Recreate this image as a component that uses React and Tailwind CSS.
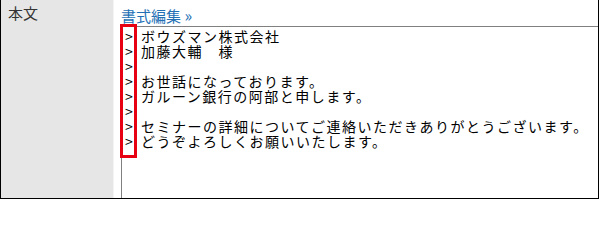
const lines = [
  'ボウズマン株式会社',
  '加藤大輔　様',
  '',
  'お世話になっております。',
  'ガルーン銀行の阿部と申します。',
  '',
  'セミナーの詳細についてご連絡いただきありがとうございます。',
  'どうぞよろしくお願いいたします。',
]

export default function App() {
  return (
    <div className="relative flex h-[199px] w-[599px] overflow-hidden border-x border-b border-black bg-white font-['Noto_Sans_CJK_JP',sans-serif]">
      <div className="w-[113px] shrink-0 border-r border-[#f4f4f4] bg-[#e6e6e6] pl-[7px] pt-[2px] text-[15px] leading-[22px] text-[#333]">
        本文
      </div>
      <div className="flex min-w-0 flex-1 flex-col pl-[7px] pt-[5px]">
        <div className="h-[21px] text-[15px] leading-[21px] text-[#2470b5]">
          <a className="cursor-pointer">書式編集 <span className="text-[16px]">»</span></a>
        </div>
        <div className="flex-1 border-l border-t border-[#808080] pl-[3px] pt-[2px] text-[14px] leading-[15px] tracking-[1.5px] text-black">
          {lines.map((line, i) => (
            <div key={i} className="flex h-[15px] whitespace-nowrap">
              <span className="w-[16px] shrink-0 tracking-normal">&gt;</span>
              <span>{line}</span>
            </div>
          ))}
        </div>
      </div>
      <div className="absolute left-[119px] top-[24px] h-[134px] w-[17px] border-[3px] border-[#e60012]" />
    </div>
  )
}
